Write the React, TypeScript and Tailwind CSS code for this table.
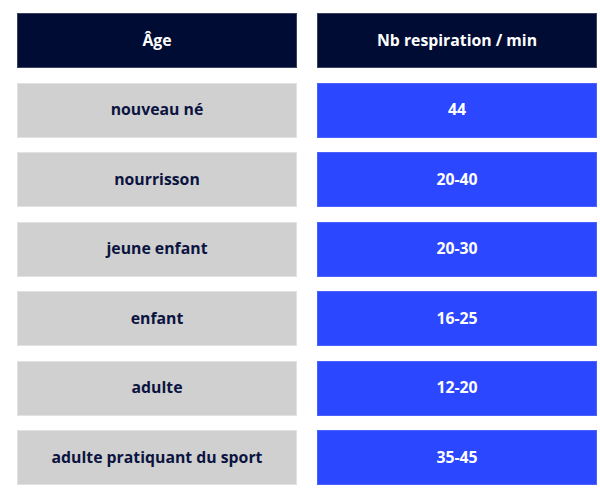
import React from "react";

const rows: [string, string][] = [
  ["nouveau né", "44"],
  ["nourrisson", "20-40"],
  ["jeune enfant", "20-30"],
  ["enfant", "16-25"],
  ["adulte", "12-20"],
  ["adulte pratiquant du sport", "35-45"],
];

export default function App() {
  return (
    <div
      className="w-[600px] h-[500px] bg-white pt-[13px] pl-[17px] pr-[3px]"
      style={{ fontFamily: '"Open Sans", "Liberation Sans", sans-serif' }}
    >
      <div className="grid grid-cols-[280px_280px] gap-x-[20px] gap-y-[14.5px]">
        <div className="h-[55px] bg-[#000c33] border border-[#3b425e] flex items-center justify-center text-white font-bold text-[15.8px]">
          Âge
        </div>
        <div className="h-[55px] bg-[#000c33] border border-[#3b425e] flex items-center justify-center text-white font-bold text-[15.8px]">
          Nb respiration / min
        </div>
        {rows.map(([a, b]) => (
          <React.Fragment key={a}>
            <div className="h-[55px] bg-[#d0d0d0] border border-[#e2e2e2] flex items-center justify-center text-[#0b1440] font-bold text-[15.8px]">
              {a}
            </div>
            <div className="h-[55px] bg-[#2b47ff] border border-[#4a62ff] flex items-center justify-center text-white font-bold text-[15.8px]">
              {b}
            </div>
          </React.Fragment>
        ))}
      </div>
    </div>
  );
}
